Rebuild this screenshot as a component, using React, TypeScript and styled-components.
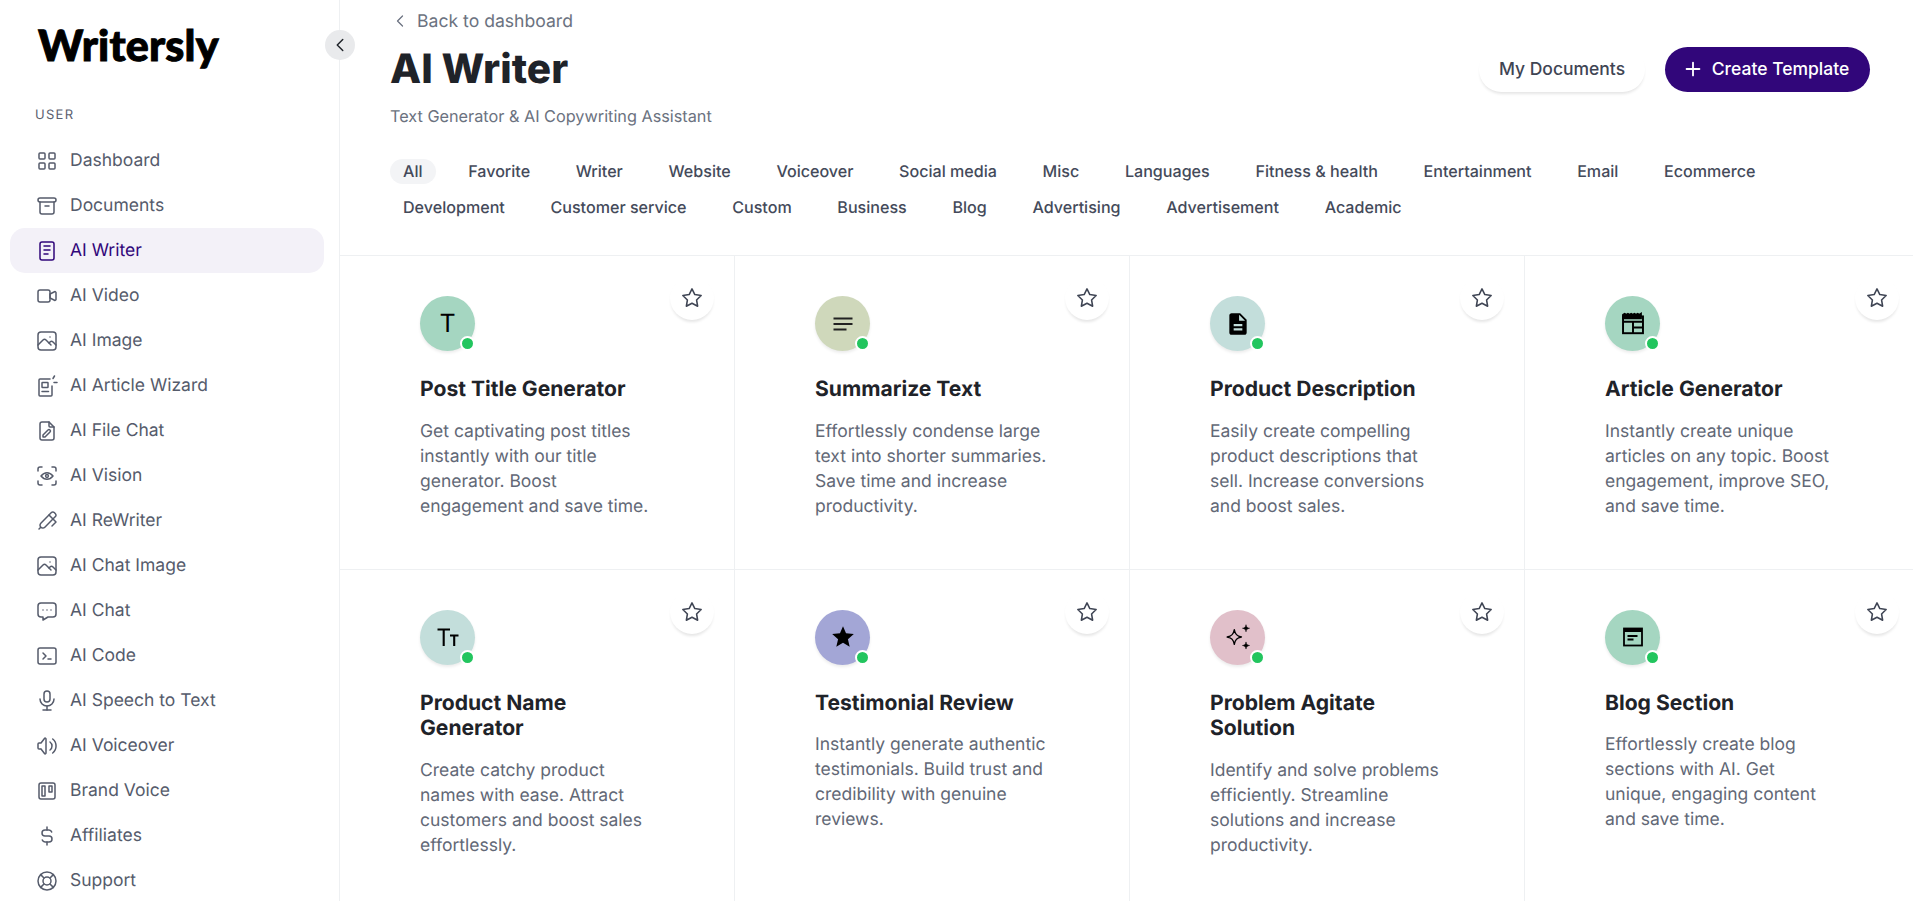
import React from 'react';
import styled, {createGlobalStyle} from 'styled-components';
import {
  TbArchive,
  TbBallpen,
  TbBrandTrello,
  TbChevronLeft,
  TbCurrencyDollar,
  TbFilePencil,
  TbLayoutGrid,
  TbLifebuoy,
  TbMessageDots,
  TbMicrophone,
  TbNotes,
  TbPhoto,
  TbPlus,
  TbStar,
  TbTerminal2,
  TbVideo,
  TbVolume,
} from 'react-icons/tb';
import {MdDescription, MdStar} from 'react-icons/md';

const GlobalStyle = createGlobalStyle`
  html, body, #root {
    height: 100%;
    margin: 0;
  }
  body {
    overflow: hidden;
    background: #fff;
    font-family: Inter, "Liberation Sans", sans-serif;
    text-rendering: geometricPrecision;
  }
`;

const Letter = styled.span`
  font-size: 25px;
  font-weight: 400;
  color: #000;
`;

function ArticleWizardIcon() {
  return (
    <svg width="24" height="24" viewBox="0 0 24 24" fill="none" stroke="currentColor" strokeWidth="1.5" strokeLinecap="round" strokeLinejoin="round">
      <path d="M15 5H5a1 1 0 0 0-1 1v15a1 1 0 0 0 1 1h11a1 1 0 0 0 1-1v-9" />
      <rect x="7" y="8.5" width="6" height="5" rx="0.5" />
      <path d="M7 17.5h6.5" />
      <path d="M18 4.5l1.5-2.5M19 8.5h3" />
    </svg>
  );
}

function VisionIcon() {
  return (
    <svg width="24" height="24" viewBox="0 0 24 24" fill="none" stroke="currentColor" strokeWidth="1.5" strokeLinecap="round" strokeLinejoin="round">
      <path d="M3 7V5a2 2 0 0 1 2-2h2M17 3h2a2 2 0 0 1 2 2v2M3 17v2a2 2 0 0 0 2 2h2M17 21h2a2 2 0 0 0 2-2v-2" />
      <path d="M6 12c3.5-4.4 8.5-4.4 12 0-3.5 4.4-8.5 4.4-12 0z" />
      <circle cx="12" cy="12" r="1.4" />
    </svg>
  );
}

function NotesLinesIcon() {
  return (
    <svg width="24" height="24" viewBox="0 0 24 24" fill="none" stroke="#222" strokeWidth="2">
      <path d="M2.5 6.5h19M2.5 12h19M2.5 17.5h13" />
    </svg>
  );
}

function NewspaperIcon() {
  return (
    <svg width="26" height="26" viewBox="0 0 24 24" fill="none" stroke="#000" strokeWidth="1.8">
      <path d="M2.8 3.6l1.5-1 1.5 1 1.5-1 1.5 1 1.5-1 1.5 1 1.5-1 1.5 1 1.5-1 1.5 1 1.5-1v4H2.8z" fill="#000" />
      <rect x="2.8" y="5" width="18.4" height="15.5" />
      <path d="M2.8 10h18.4M12 10v10.5M12 15.2h9.2" />
    </svg>
  );
}

function TextSizeIcon() {
  return (
    <svg width="24" height="24" viewBox="0 0 24 24" fill="none" stroke="#000" strokeWidth="2.1">
      <path d="M1.5 4.5h12.5M7.7 4.5V21M14 10.5h8.5M18.2 10.5V21" />
    </svg>
  );
}

function SparkIcon() {
  return (
    <svg width="32" height="32" viewBox="0 0 26 26" fill="none" stroke="#000" strokeWidth="1.1" strokeLinejoin="round">
      <path d="M10 7c.6 3.8 2 5.3 5.8 6-3.8.7-5.2 2.2-5.8 6-.6-3.8-2-5.3-5.8-6 3.8-.7 5.2-2.2 5.8-6z" />
      <path d="M19.5 3c.3 1.9 1 2.6 2.9 2.9-1.9.3-2.6 1-2.9 2.9-.3-1.9-1-2.6-2.9-2.9 1.9-.3 2.6-1 2.9-2.9zM19.5 17c.3 1.9 1 2.6 2.9 2.9-1.9.3-2.6 1-2.9 2.9-.3-1.9-1-2.6-2.9-2.9 1.9-.3 2.6-1 2.9-2.9z" fill="#000" strokeWidth="0.4" />
    </svg>
  );
}

function BlogIcon() {
  return (
    <svg width="24" height="24" viewBox="0 0 24 24" fill="none" stroke="#000" strokeWidth="1.8">
      <rect x="3" y="3.5" width="18" height="17" />
      <path d="M3 5.5h18" strokeWidth="3" />
      <path d="M6.5 11h10M6.5 14.5h6" />
    </svg>
  );
}

const navItems = [
  {label: 'Dashboard', icon: <TbLayoutGrid />},
  {label: 'Documents', icon: <TbArchive />},
  {label: 'AI Writer', icon: <TbNotes />, active: true},
  {label: 'AI Video', icon: <TbVideo />},
  {label: 'AI Image', icon: <TbPhoto />},
  {label: 'AI Article Wizard', icon: <ArticleWizardIcon />},
  {label: 'AI File Chat', icon: <TbFilePencil />},
  {label: 'AI Vision', icon: <VisionIcon />},
  {label: 'AI ReWriter', icon: <TbBallpen />},
  {label: 'AI Chat Image', icon: <TbPhoto />},
  {label: 'AI Chat', icon: <TbMessageDots />},
  {label: 'AI Code', icon: <TbTerminal2 />},
  {label: 'AI Speech to Text', icon: <TbMicrophone />},
  {label: 'AI Voiceover', icon: <TbVolume />},
  {label: 'Brand Voice', icon: <TbBrandTrello />},
  {label: 'Affiliates', icon: <TbCurrencyDollar />},
  {label: 'Support', icon: <TbLifebuoy />},
];

const tabs = [
  'All', 'Favorite', 'Writer', 'Website', 'Voiceover', 'Social media', 'Misc', 'Languages',
  'Fitness & health', 'Entertainment', 'Email', 'Ecommerce', 'Development', 'Customer service',
  'Custom', 'Business', 'Blog', 'Advertising', 'Advertisement', 'Academic',
];

const cards = [
  {title: 'Post Title Generator', text: 'Get captivating post titles instantly with our title generator. Boost engagement and save time.', color: '#a5d6c1', icon: <Letter>T</Letter>},
  {title: 'Summarize Text', text: 'Effortlessly condense large text into shorter summaries. Save time and increase productivity.', color: '#cfd8bb', icon: <NotesLinesIcon />},
  {title: 'Product Description', text: 'Easily create compelling product descriptions that sell. Increase conversions and boost sales.', color: '#c3dedb', icon: <MdDescription size={26} color="#000" />},
  {title: 'Article Generator', text: 'Instantly create unique articles on any topic. Boost engagement, improve SEO, and save time.', color: '#a5d6c1', icon: <NewspaperIcon />},
  {title: 'Product Name Generator', text: 'Create catchy product names with ease. Attract customers and boost sales effortlessly.', color: '#c3dedb', icon: <TextSizeIcon />},
  {title: 'Testimonial Review', text: 'Instantly generate authentic testimonials. Build trust and credibility with genuine reviews.', color: '#a3a6d6', icon: <MdStar size={26} color="#000" />},
  {title: 'Problem Agitate Solution', text: 'Identify and solve problems efficiently. Streamline solutions and increase productivity.', color: '#e1c0ca', icon: <SparkIcon />},
  {title: 'Blog Section', text: 'Effortlessly create blog sections with AI. Get unique, engaging content and save time.', color: '#a5d6c1', icon: <BlogIcon />},
];

export default function App() {
  return (
    <>
      <GlobalStyle />
      <Page>
        <Sidebar>
          <Logo>Writersly</Logo>
          <SectionLabel>USER</SectionLabel>
          <nav>
            {navItems.map(item => (
              <NavItem key={item.label} $active={item.active}>
                <NavIcon>{item.icon}</NavIcon>
                {item.label}
              </NavItem>
            ))}
          </nav>
          <CollapseButton>
            <TbChevronLeft size={22} />
          </CollapseButton>
        </Sidebar>
        <Main>
          <Header>
            <div>
              <BackLink>
                <TbChevronLeft size={20} />
                Back to dashboard
              </BackLink>
              <Title>AI Writer</Title>
              <Subtitle>Text Generator &amp; AI Copywriting Assistant</Subtitle>
            </div>
            <Actions>
              <GhostButton>My Documents</GhostButton>
              <PrimaryButton>
                <TbPlus size={22} />
                Create Template
              </PrimaryButton>
            </Actions>
          </Header>
          <Tabs>
            {tabs.map(tab => (
              <Tab key={tab} $active={tab === 'All'}>{tab}</Tab>
            ))}
          </Tabs>
          <CardGrid>
            {cards.map(card => (
              <Card key={card.title}>
                <FavButton>
                  <TbStar size={22} />
                </FavButton>
                <Avatar $color={card.color}>
                  {card.icon}
                  <StatusDot />
                </Avatar>
                <CardTitle>{card.title}</CardTitle>
                <CardText>{card.text}</CardText>
              </Card>
            ))}
          </CardGrid>
        </Main>
      </Page>
    </>
  );
}

const Page = styled.div`
  display: flex;
  height: 100%;
  overflow: hidden;
`;
const Sidebar = styled.aside`
  position: relative;
  flex: 0 0 340px;
  box-sizing: border-box;
  border-right: 1px solid #eef0f2;
  background: #fff;
  z-index: 1;
`;
const Logo = styled.div`
  height: 90px;
  padding: 20px 0 0 38px;
  box-sizing: border-box;
  font-family: Lato, sans-serif;
  font-size: 43px;
  line-height: 52px;
  font-weight: 900;
  color: #000;
  -webkit-text-stroke: 1px #000;
  letter-spacing: 0.2px;
`;
const SectionLabel = styled.div`
  height: 48px;
  padding: 16px 0 0 35px;
  box-sizing: border-box;
  font-size: 13px;
  line-height: 18px;
  letter-spacing: 1.3px;
  color: #5b6170;
`;
const NavItem = styled.a<{$active?: boolean}>`
  display: flex;
  align-items: center;
  gap: 11px;
  height: 45px;
  width: 314px;
  margin-left: 10px;
  padding-left: 25px;
  box-sizing: border-box;
  border-radius: 15px;
  font-size: 17.5px;
  color: ${p => (p.$active ? '#31067a' : '#555b6b')};
  background: ${p => (p.$active ? '#f3f1f8' : 'transparent')};
`;
const NavIcon = styled.span`
  display: flex;
  font-size: 24px;
  svg {
    stroke-width: 1.5;
  }
`;
const CollapseButton = styled.button`
  position: absolute;
  top: 30px;
  right: -16px;
  width: 30px;
  height: 30px;
  padding: 0;
  border: 0;
  border-radius: 50%;
  display: flex;
  align-items: center;
  justify-content: center;
  background: #e9eaec;
  color: #1f2329;
  svg {
    stroke-width: 1.6;
  }
`;
const Main = styled.main`
  flex: 1;
  min-width: 0;
  overflow: hidden;
`;
const Header = styled.header`
  display: flex;
  justify-content: space-between;
  padding: 9px 43px 0 50px;
`;
const BackLink = styled.a`
  display: flex;
  align-items: center;
  gap: 7px;
  height: 24px;
  font-size: 17.6px;
  color: #6b7280;
  svg {
    stroke-width: 1.5;
  }
`;
const Title = styled.h1`
  margin: 10px 0 0;
  font-size: 40.5px;
  line-height: 52px;
  font-weight: 800;
  color: #1f2329;
`;
const Subtitle = styled.p`
  margin: 9px 0 0;
  font-size: 16.25px;
  line-height: 24px;
  color: #6b7280;
`;
const Actions = styled.div`
  display: flex;
  gap: 20px;
  padding-top: 38px;
`;
const GhostButton = styled.button`
  height: 45px;
  width: 166px;
  padding: 0 0 2px;
  border: 0;
  border-radius: 23px;
  background: #fff;
  box-shadow: 0 3px 3px -1px rgba(0, 0, 0, 0.1);
  font: 500 17.5px Inter, sans-serif;
  color: #3f4554;
`;
const PrimaryButton = styled.button`
  display: flex;
  align-items: center;
  justify-content: center;
  gap: 8px;
  height: 45px;
  width: 205px;
  padding: 0 4px 2px 0;
  border: 0;
  border-radius: 23px;
  background: #31067a;
  font: 500 17.5px Inter, sans-serif;
  color: #fff;
`;
const Tabs = styled.div`
  display: flex;
  flex-wrap: wrap;
  gap: 11px 19.65px;
  padding: 0 43px 0 50px;
  margin-top: 31px;
`;
const Tab = styled.span<{$active?: boolean}>`
  height: 25px;
  padding: 0 13px;
  border-radius: 13px;
  font-size: 16.1px;
  line-height: 25px;
  font-weight: 450;
  color: #444a5a;
  background: ${p => (p.$active ? '#f3f4f6' : 'transparent')};
`;
const CardGrid = styled.section`
  display: grid;
  grid-template-columns: repeat(4, 395px);
  margin-top: 35px;
  border-top: 1px solid #eef0f2;
`;
const Card = styled.article`
  position: relative;
  box-sizing: border-box;
  padding: 40px 79px 50px 80px;
  border-right: 1px solid #eef0f2;
  border-bottom: 1px solid #eef0f2;
`;
const FavButton = styled.button`
  position: absolute;
  top: 20px;
  right: 20px;
  width: 44px;
  height: 44px;
  padding: 0;
  border: 0;
  border-radius: 50%;
  display: flex;
  align-items: center;
  justify-content: center;
  background: #fff;
  box-shadow: 0 3px 3px -1px rgba(0, 0, 0, 0.1);
  color: #3f4554;
  svg {
    stroke-width: 1.7;
  }
`;
const Avatar = styled.div<{$color: string}>`
  position: relative;
  width: 55px;
  height: 55px;
  border-radius: 50%;
  display: flex;
  align-items: center;
  justify-content: center;
  background: ${p => p.$color};
  box-shadow: 0 2px 3px rgba(0, 0, 0, 0.08);
`;
const StatusDot = styled.span`
  position: absolute;
  right: 0;
  bottom: 0;
  width: 11px;
  height: 11px;
  border: 2px solid #fff;
  border-radius: 50%;
  background: #22c55e;
`;
const CardTitle = styled.h3`
  margin: 26px 0 0;
  font-size: 21.1px;
  line-height: 25.5px;
  font-weight: 650;
  color: #1f2329;
`;
const CardText = styled.p`
  margin: 16px 0 0;
  font-size: 17.5px;
  line-height: 25px;
  color: #626876;
`;
